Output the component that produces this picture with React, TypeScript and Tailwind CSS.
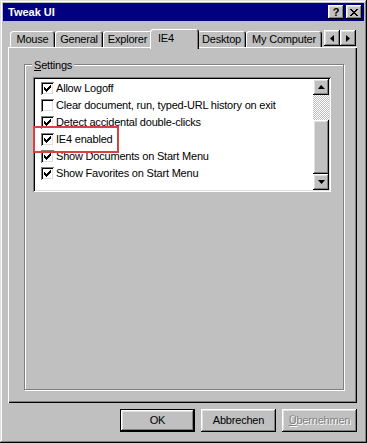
import React from "react";

const raised =
  "shadow-[inset_-1px_-1px_#000,inset_1px_1px_#fff,inset_-2px_-2px_#808080,inset_2px_2px_#dfdfdf]";
const sunken =
  "shadow-[inset_1px_1px_#808080,inset_-1px_-1px_#fff,inset_2px_2px_#000,inset_-2px_-2px_#dfdfdf]";

function Check() {
  const cols = [2, 3, 4, 3, 2, 1, 0];
  return (
    <svg width="7" height="7" viewBox="0 0 7 7" shapeRendering="crispEdges">
      {cols.map((y, x) => (
        <rect key={x} x={x} y={y} width="1" height="3" fill="#000" />
      ))}
    </svg>
  );
}

function CheckBox({ checked }: { checked: boolean }) {
  return (
    <div className={`w-[13px] h-[13px] shrink-0 bg-white flex items-center justify-center ${sunken}`}>
      {checked && <Check />}
    </div>
  );
}

function Row({ checked, label, focus }: { checked: boolean; label: string; focus?: boolean }) {
  return (
    <div className="h-[17px] flex items-center gap-[2px] pl-[6px]">
      <CheckBox checked={checked} />
      <span className={focus ? "px-[1px] -mx-[1px]" : ""}>{label}</span>
    </div>
  );
}

function Tab({ label, w, selected }: { label: string; w: string; selected?: boolean }) {
  if (selected) {
    return (
      <div
        className={`${w} h-[20px] -mx-[2px] -mb-[2px] relative z-10 bg-[#c0c0c0] rounded-t-[3px] shadow-[inset_1px_1px_#fff,inset_-1px_0_#000,inset_-2px_0_#808080] flex items-start pt-[4px] pl-[8px]`}
      >
        {label}
      </div>
    );
  }
  return (
    <div
      className={`${w} h-[16px] bg-[#c0c0c0] rounded-t-[3px] shadow-[inset_1px_1px_#fff,inset_-1px_0_#000,inset_-2px_0_#808080] flex items-center justify-center pt-[1px]`}
    >
      {label}
    </div>
  );
}

function Arrow({ dir }: { dir: "up" | "down" | "left" | "right" }) {
  const paths: Record<string, string> = {
    up: "M3 0 L7 4 L0 4 Z",
    down: "M0 0 L7 0 L3.5 4 Z",
    left: "M4 0 L4 7 L0 3.5 Z",
    right: "M0 0 L4 3.5 L0 7 Z",
  };
  const vertical = dir === "up" || dir === "down";
  return (
    <svg width={vertical ? 7 : 4} height={vertical ? 4 : 7} viewBox={vertical ? "0 0 7 4" : "0 0 4 7"}>
      <path d={paths[dir]} fill="#000" />
    </svg>
  );
}

export default function App() {
  return (
    <div className="w-[367px] h-[443px] relative bg-[#c0c0c0] p-[3px] shadow-[inset_-1px_-1px_#000,inset_1px_1px_#dfdfdf,inset_-2px_-2px_#808080,inset_2px_2px_#fff] font-['Liberation_Sans',Arial,sans-serif] text-[11px] tracking-[-0.2px] text-black leading-none select-none">
      {/* Title bar */}
      <div className="h-[18px] bg-[#000080] flex items-center pl-[5px] pr-[2px]">
        <span className="text-white font-bold text-[11px] tracking-normal">Tweak UI</span>
        <div className="ml-auto flex gap-[2px]">
          <div className={`w-[16px] h-[14px] bg-[#c0c0c0] flex items-center justify-center font-bold text-[11px] ${raised}`}>
            ?
          </div>
          <div className={`w-[16px] h-[14px] bg-[#c0c0c0] flex items-center justify-center ${raised}`}>
            <svg width="8" height="7" viewBox="0 0 8 7" shapeRendering="crispEdges">
              <path d="M0 0h2v1h1v1h2v-1h1v-1h2v1h-1v1h-1v1h-1v1h1v1h1v1h1v1h-2v-1h-1v-1h-2v1h-1v1h-2v-1h1v-1h1v-1h1v-1h-1v-1h-1v-1h-1z" fill="#000" />
            </svg>
          </div>
        </div>
      </div>

      {/* Body */}
      <div className="pl-[5px] pr-[7px] pt-[8px]">
        {/* Tabs */}
        <div className="relative z-10 flex items-end h-[18px] pl-[2px]">
          <Tab label="Mouse" w="w-[45px]" />
          <Tab label="General" w="w-[48px]" />
          <Tab label="Explorer" w="w-[49px]" />
          <Tab label="IE4" w="w-[49px]" selected />
          <Tab label="Desktop" w="w-[49px]" />
          <Tab label="My Computer" w="w-[76px]" />
          <div className="flex ml-[2px] mb-[1px]">
            <div className={`w-[16px] h-[16px] bg-[#c0c0c0] flex items-center justify-center ${raised}`}>
              <Arrow dir="left" />
            </div>
            <div className={`w-[16px] h-[16px] bg-[#c0c0c0] flex items-center justify-center ${raised}`}>
              <Arrow dir="right" />
            </div>
          </div>
        </div>

        {/* Panel */}
        <div className="h-[356px] bg-[#c0c0c0] shadow-[inset_1px_1px_#fff,inset_-1px_-1px_#000,inset_-2px_-2px_#808080] pl-[16px] pr-[13px] pt-[17px]">
          <div className="relative h-[326px] border border-[#808080] shadow-[inset_1px_1px_#fff,1px_1px_#fff] pl-[8px] pt-[12px]">
            <div className="absolute left-[7px] -top-[6px] bg-[#c0c0c0] px-[2px] leading-[12px]">
              <span className="underline underline-offset-[1px]">S</span>ettings
            </div>
            {/* List box */}
            <div className={`w-[298px] h-[115px] bg-white p-[2px] flex ${sunken}`}>
              <div className="flex-1 pt-[1px] bg-white">
                <Row checked label="Allow Logoff" />
                <Row checked={false} label="Clear document, run, typed-URL history on exit" focus />
                <Row checked label="Detect accidental double-clicks" />
                <Row checked label="IE4 enabled" />
                <Row checked label="Show Documents on Start Menu" />
                <Row checked label="Show Favorites on Start Menu" />
              </div>
              {/* Scrollbar */}
              <div className="w-[16px] flex flex-col">
                <div className={`h-[16px] bg-[#c0c0c0] flex items-center justify-center ${raised}`}>
                  <Arrow dir="up" />
                </div>
                <div className="h-[25px] bg-[repeating-conic-gradient(#c0c0c0_0_25%,#ffffff_0_50%)] bg-[length:2px_2px]" />
                <div className={`flex-1 bg-[#c0c0c0] ${raised}`} />
                <div className={`h-[16px] bg-[#c0c0c0] flex items-center justify-center ${raised}`}>
                  <Arrow dir="down" />
                </div>
              </div>
            </div>
          </div>
        </div>

        {/* Buttons */}
        <div className="flex justify-end gap-[6px] mt-[6px]">
          <div className="w-[75px] h-[23px] border border-black">
            <div className={`w-full h-full bg-[#c0c0c0] flex items-center justify-center ${raised}`}>OK</div>
          </div>
          <div className={`w-[75px] h-[23px] bg-[#c0c0c0] flex items-center justify-center ${raised}`}>Abbrechen</div>
          <div className={`w-[75px] h-[23px] bg-[#c0c0c0] flex items-center justify-center text-[#808080] [text-shadow:1px_1px_#fff] ${raised}`}>
            <span className="underline underline-offset-[1px]">Ü</span>bernehmen
          </div>
        </div>
      </div>

      {/* Annotation highlight */}
      <div className="absolute left-[33px] top-[126px] w-[86px] h-[27px] border-2 border-[#d9403f]" />
    </div>
  );
}
